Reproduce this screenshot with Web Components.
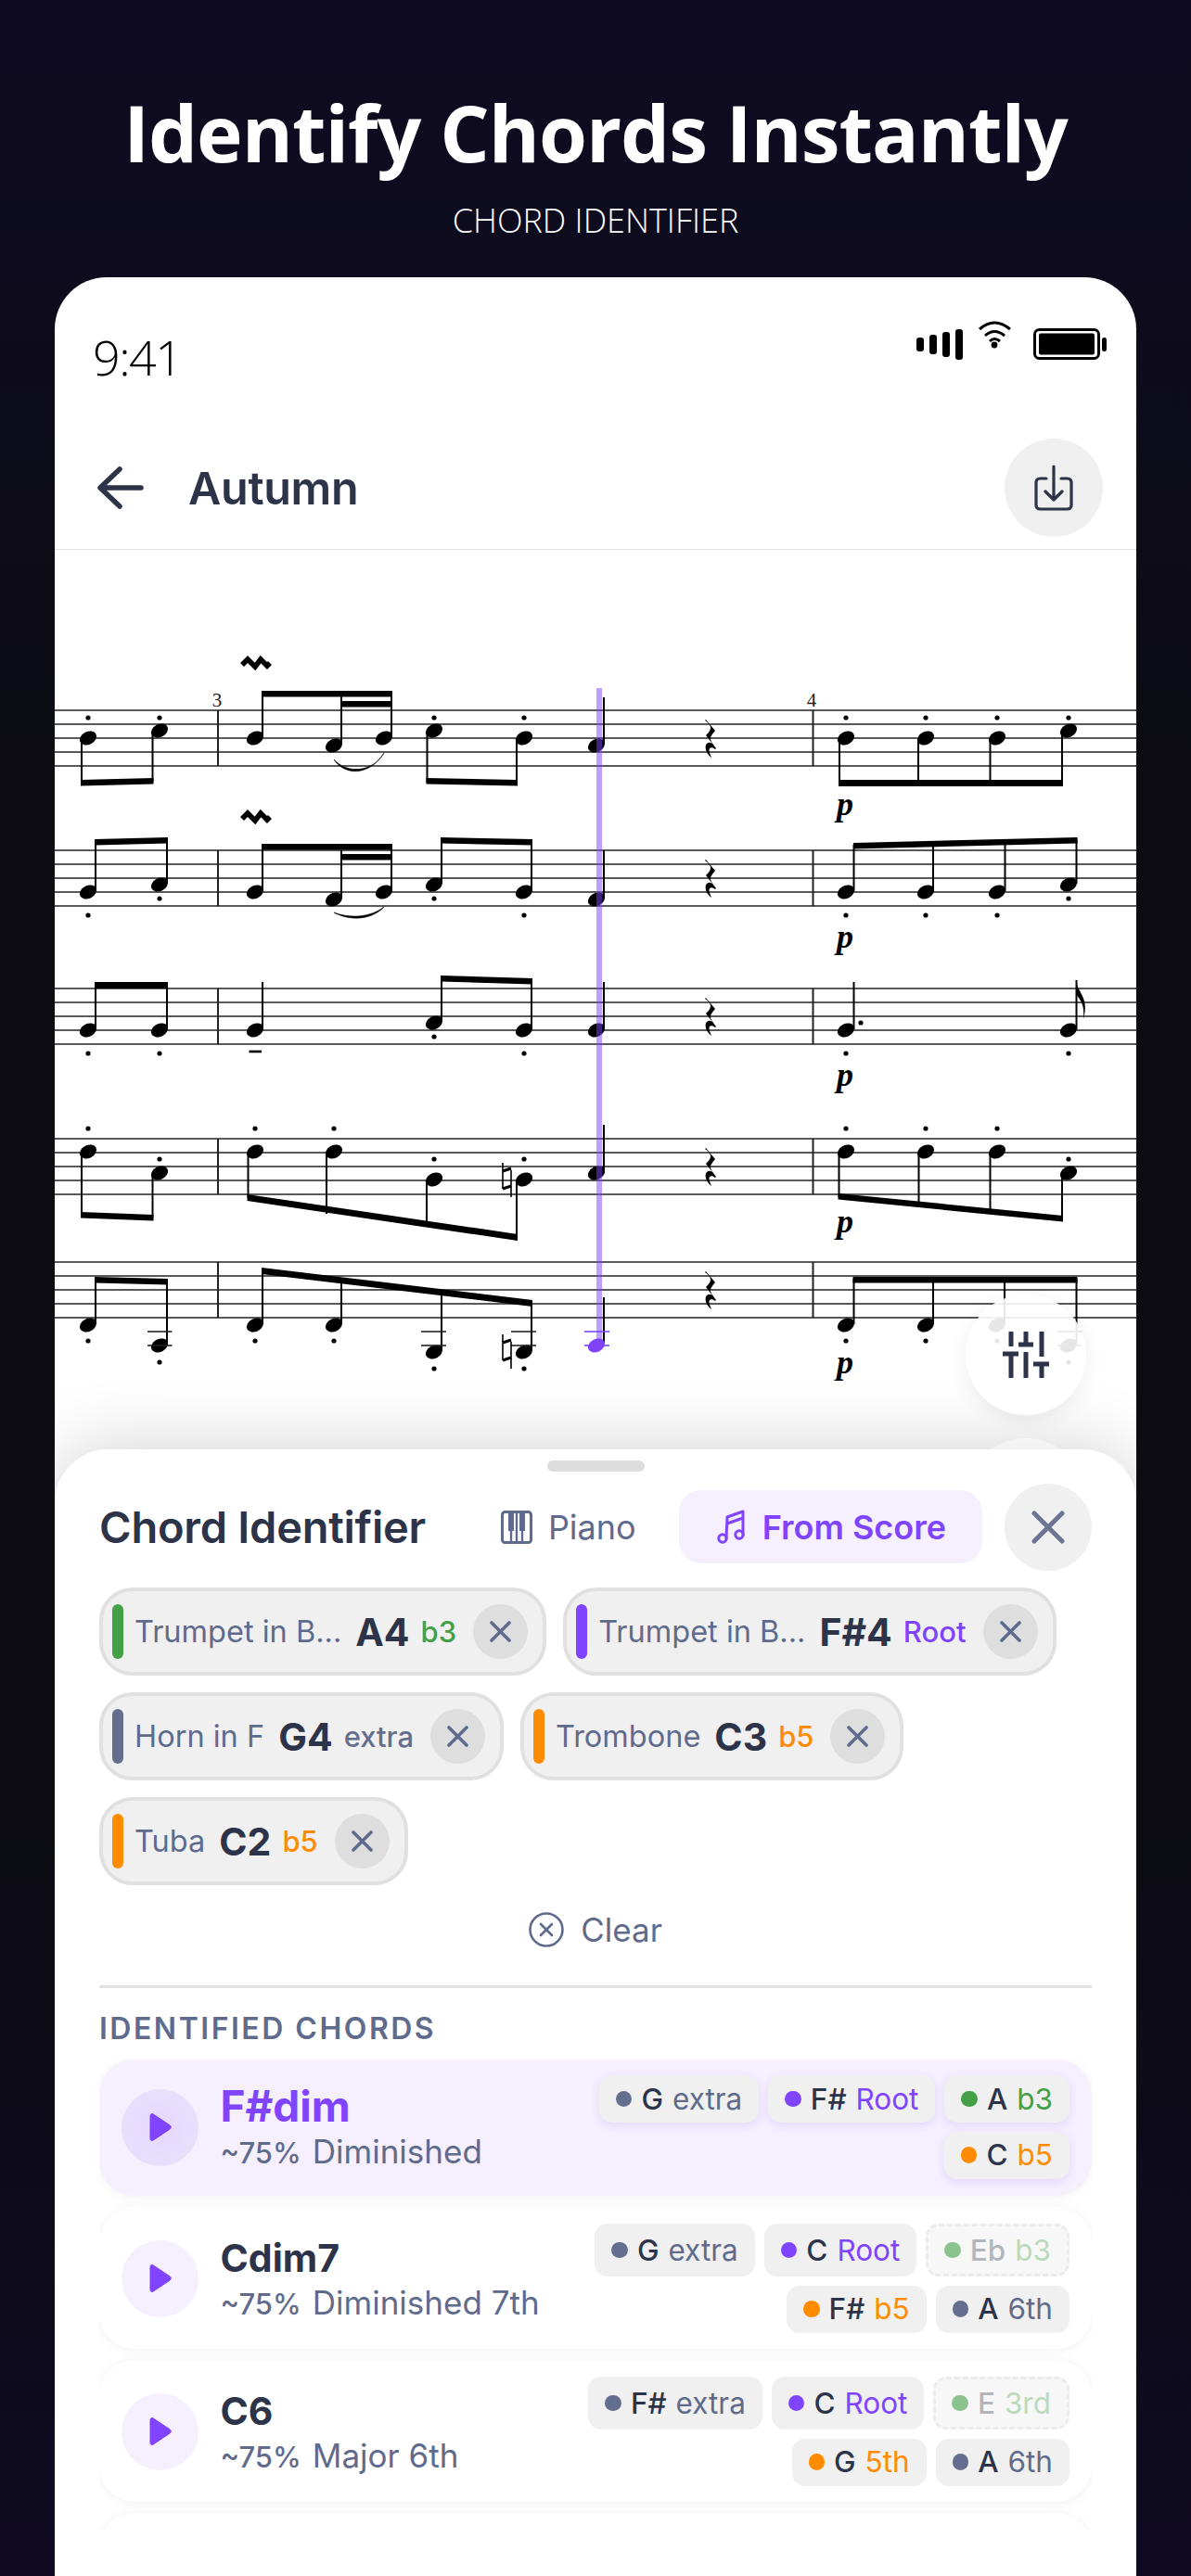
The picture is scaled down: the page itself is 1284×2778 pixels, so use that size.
<!DOCTYPE html>
<html><head><meta charset="utf-8"><title>Identify Chords Instantly</title>
<style>
html,body{margin:0;padding:0;width:1284px;height:2778px;overflow:hidden;background:#0c0c12;}
</style></head><body>
<promo-page>
  <promo-hero slot="hero" heading="Identify Chords Instantly" tag="CHORD IDENTIFIER"></promo-hero>
  <phone-frame>
    <status-bar></status-bar>
    <nav-header>Autumn</nav-header>
    <score-view></score-view>
    <chord-sheet>
      <note-chip slot="chips" tone="green" inst="Trumpet in B..." note="A4" role="b3"></note-chip>
      <note-chip slot="chips" tone="purple" inst="Trumpet in B..." note="F#4" role="Root"></note-chip>
      <note-chip slot="chips" tone="slate" inst="Horn in F" note="G4" role="extra"></note-chip>
      <note-chip slot="chips" tone="orange" inst="Trombone" note="C3" role="b5"></note-chip>
      <note-chip slot="chips" tone="orange" inst="Tuba" note="C2" role="b5"></note-chip>
      <chord-row active name="F#dim" pct="~75%" kind="Diminished">
        <tone-tag tone="slate" role="extra">G</tone-tag><tone-tag tone="purple" role="Root">F#</tone-tag><tone-tag tone="green" role="b3">A</tone-tag><tone-tag tone="orange" role="b5">C</tone-tag>
      </chord-row>
      <chord-row name="Cdim7" pct="~75%" kind="Diminished 7th">
        <tone-tag tone="slate" role="extra">G</tone-tag><tone-tag tone="purple" role="Root">C</tone-tag><tone-tag ghost tone="green" role="b3">Eb</tone-tag><tone-tag tone="orange" role="b5">F#</tone-tag><tone-tag tone="slate" role="6th">A</tone-tag>
      </chord-row>
      <chord-row name="C6" pct="~75%" kind="Major 6th">
        <tone-tag tone="slate" role="extra">F#</tone-tag><tone-tag tone="purple" role="Root">C</tone-tag><tone-tag ghost tone="green" role="3rd">E</tone-tag><tone-tag tone="orange" role="5th">G</tone-tag><tone-tag tone="slate" role="6th">A</tone-tag>
      </chord-row>
      <chord-row name="" pct="" kind=""></chord-row>
    </chord-sheet>
  </phone-frame>
</promo-page>
<script>
const TONES={green:'#43a047',purple:'#8044ff',slate:'#646e8e',orange:'#ff8c00'};
const INK='#2d3348',SLATE='#5f6b8c';
function def(name,css,html,init){
  customElements.define(name,class extends HTMLElement{
    constructor(){super();this.attachShadow({mode:'open'});}
    connectedCallback(){
      const h=typeof html==='function'?html(this):html;
      this.shadowRoot.innerHTML='<style>'+css+'</style>'+h;
      if(init)init(this);
    }
  });
}
def('promo-page',`
:host{display:flex;flex-direction:column;width:1284px;height:2778px;
background:linear-gradient(180deg,#0e0b23 0,#0c0c12 30%,#0c0c12 70%,#0f0a22 100%);font-family:Inter,"Noto Sans",sans-serif;overflow:hidden}
`,`<slot name="hero"></slot><slot></slot>`);

def('promo-hero',`
:host{display:flex;flex-direction:column;align-items:center;height:299px;flex:none;color:#fff;font-family:"Open Sans",sans-serif}
h1{margin:0;padding-top:86px;font-size:84px;line-height:114px;font-weight:700;letter-spacing:-1px}
p{margin:0;margin-top:15px;font-size:36px;line-height:46px;font-weight:300}
`,el=>`<h1>${el.getAttribute('heading')}</h1><p>${el.getAttribute('tag')}</p>`);

def('phone-frame',`
:host{display:flex;flex-direction:column;flex:1;min-height:0;margin:0 59px;background:#fff;border-radius:56px 56px 0 0;overflow:hidden;position:relative}
`,`<slot></slot>`);

def('status-bar',`
:host{display:flex;justify-content:space-between;align-items:flex-start;height:160px;flex:none;padding:0 31px 0 41px;box-sizing:border-box}
.t{font-family:"Open Sans",sans-serif;font-weight:300;font-size:52px;line-height:60px;margin-top:56px;color:#000;letter-spacing:-1.5px}
svg{display:block;margin-top:46px}
`,`<div class="t">9:41</div>
<svg width="206" height="45" viewBox="989 345 206 45">
<g fill="#000"><rect x="989" y="364" width="8" height="15" rx="3"/><rect x="1003" y="361" width="8" height="21" rx="3"/><rect x="1017" y="358" width="8" height="27" rx="3"/><rect x="1031" y="355" width="8" height="33" rx="3"/></g>
<g fill="none" stroke="#000" stroke-width="3"><path d="M1057 355Q1073 341 1090 355"/><path d="M1063 362Q1073 353 1084 362"/><path d="M1068 368Q1073 363 1079 368"/></g>
<circle cx="1073" cy="372" r="3.4"/>
<rect x="1116.5" y="355.5" width="69" height="31" rx="5" fill="none" stroke="#000" stroke-width="3"/>
<rect x="1121" y="359.5" width="60" height="23" rx="2" fill="#000"/>
<rect x="1189" y="364" width="5" height="15" rx="2.5" fill="#000"/>
</svg>`);

def('nav-header',`
:host{display:flex;align-items:center;flex:none;padding:14px 36px 13px 46px;border-bottom:1px solid #e4e4e4}
svg.b{display:block;margin-right:48px}
.t{font-size:48.5px;line-height:58px;font-weight:600;color:${INK};flex:1;letter-spacing:-.3px;padding-top:2px}
.btn{width:106px;height:106px;border-radius:50%;background:#f0f0f0;display:flex;align-items:center;justify-content:center}
`,`<svg class="b" width="50" height="46" viewBox="0 0 50 46" fill="none" stroke="${INK}" stroke-width="5.5" stroke-linecap="round" stroke-linejoin="round"><path d="M47 23H5M24 3L3 23l21 20"/></svg>
<div class="t"><slot></slot></div>
<div class="btn"><svg width="42" height="50" viewBox="0 0 42 50" fill="none" stroke="${INK}" stroke-width="3.2" stroke-linecap="round" stroke-linejoin="round"><path d="M13 15H6a4 4 0 0 0-4 4v25a4 4 0 0 0 4 4h30a4 4 0 0 0 4-4V19a4 4 0 0 0-4-4h-7"/><path d="M21 2v36M12 29l9 9 9-9"/></svg></div>`);

function musicSvg(){
  const out=[];
  const head=(x,y,f='#000')=>out.push(`<ellipse cx="${x}" cy="${y}" rx="9.6" ry="6.9" fill="${f}" transform="rotate(-27 ${x} ${y})"/>`);
  const line=(x1,y1,x2,y2,w=2,c='#000')=>out.push(`<line x1="${x1}" y1="${y1}" x2="${x2}" y2="${y2}" stroke="${c}" stroke-width="${w}"/>`);
  const beam=(x1,y1,x2,y2,h=6.5)=>out.push(`<polygon points="${x1},${y1} ${x2},${y2} ${x2},${y2+h} ${x1},${y1+h}"/>`);
  const dot=(x,y)=>out.push(`<circle cx="${x}" cy="${y}" r="2.6"/>`);
  const up=(hx,hy,sx,top)=>{head(hx,hy);line(sx,hy-1,sx,top);};
  const dn=(hx,hy,sx,bot)=>{head(hx,hy);line(sx,hy+1,sx,bot);};
  const rest=(x,y,h)=>{const k=h/41;out.push(`<path transform="translate(${x} ${y}) scale(${k})" d="M-5 0L5 12C3 15 0 17 0 21C0 23 3 27 6 31L5 32C1 29-3 30-1 36L1 41C-5 37-7 29-4 26C-2 24 0 25 2 26L-5 17C-2 14 0 12 0 9C0 6-3 3-6 1Z"/>`);};
  const mordent=(x,y)=>out.push(`<polyline transform="translate(${x} ${y})" points="-14,2 -8,-4 0,4 6,-4 13,3 16,0" fill="none" stroke="#000" stroke-width="5.6"/>`);
  const natural=(y)=>{line(542,y,542,y+28,1.6);line(551,y+8,551,y+37,1.6);line(542,y+9,551,y+6,3.2);line(542,y+28,551,y+25,3.2);};
  const ledger=(x1,x2,c='#222')=>{line(x1,1437,x2,1437,1.6,c);line(x1,1452,x2,1452,1.6,c);};
  const p=(x,y)=>out.push(`<text x="${x}" y="${y}" font-family="'Liberation Serif',serif" font-weight="700" font-style="italic" font-size="36" text-anchor="middle">p</text>`);
  const num=(x,y,t)=>out.push(`<text x="${x}" y="${y}" font-family="'Liberation Serif',serif" font-size="21" fill="#222" text-anchor="middle">${t}</text>`);
  [767,918,1067,1229,1362].forEach((t,i)=>{
    const gaps=[0,15,30,45,60];
    gaps.forEach(g=>line(59,t+g,1225,t+g,1.6,'#222'));
    line(235,t,235,t+60,2,'#222');line(876.5,t,876.5,t+60,2,'#222');
    rest(766,t+10,41);
  });
  // staff 1
  dn(95,797,88,846);dn(172,789,164.5,844);beam(87,842,165.5,840);dot(95,775);dot(172,775);
  num(234,763,'3');mordent(275,716);
  up(275,797,283,746);up(360,805,368,752);up(414,797,422,746);beam(282,746,423,746);beam(367,757,423,757);
  out.push(`<path d="M360 820C372 838 398 838 414 813C402 834 374 836 360 820Z" stroke="#000" stroke-width=".6"/>`);
  dn(468,789,460.5,845);dn(565,797,557,846);beam(459.5,840,558,842);dot(468,775);dot(565,775);
  up(643,805,651,753);
  num(875,763,'4');
  dn(912,797,905,845);dn(998,797,990,845);dn(1075,797,1067.5,845);dn(1152,789,1145,845);beam(904,842,1146,842,7);
  [912,998,1075,1152].forEach(x=>dot(x,775));p(911,880);
  // staff 2
  up(95,963,103,908);up(172,955,180,906);beam(102,906,181,904);dot(95,988);dot(172,970);
  mordent(275,882);
  up(275,963,283,912);up(360,971,368,918);up(414,963,422,912);beam(282,911,423,911);beam(367,922,423,922);
  out.push(`<path d="M360 985C378 992 400 990 414 979C400 994 376 994 360 985Z" stroke="#000" stroke-width=".6"/>`);
  up(468,955,476,906);up(565,963,573,908);beam(475,904,574,906);dot(468,970);dot(565,988);
  up(643,971,651,918);
  up(912,963,920.5,912);up(998,963,1006,910);up(1075,963,1083.5,908);up(1152,955,1160.5,906);beam(920,910,1161.5,904,6.5);
  dot(912,988);dot(998,988);dot(1075,988);dot(1152,970);p(911,1023);
  // staff 3
  up(95,1112,103,1062);up(172,1112,180,1062);beam(102,1060,181,1060,7);dot(95,1137);dot(172,1137);
  up(275,1112,283,1060);line(268.5,1135,282,1135,2.6);
  up(468,1104,476,1055);up(565,1112,573,1058);beam(475,1053,574,1056);dot(468,1119);dot(565,1137);
  up(643,1112,651,1060);
  up(912,1112,920.5,1060);dot(928,1104);dot(912,1137);
  up(1152,1112,1160.5,1058);out.push(`<path d="M1160 1057C1161 1072 1175 1076 1168 1100C1170 1082 1163 1079 1160 1072Z"/>`);dot(1152,1137);
  p(911,1172);
  // staff 4
  dn(95,1243,88,1312);dn(172,1266,164.5,1314);beam(87,1308,165.5,1311,6.5);dot(95,1218);dot(172,1251);
  dn(275,1243,267.5,1293);dn(360,1243,352,1310);dn(468,1273,460,1318);dn(565,1273,557,1335);beam(266.5,1289,558,1332,7);
  dot(275,1218);dot(360,1218);dot(468,1251);dot(565,1251);natural(1255);
  up(643,1266,651,1214);
  dn(912,1243,904.5,1292);dn(998,1243,990.5,1300);dn(1075,1243,1067.5,1306);dn(1152,1266,1145,1315);beam(903.5,1288,1146,1312,6.5);
  [912,998,1075].forEach(x=>dot(x,1218));dot(1152,1251);p(911,1330);
  // staff 5
  up(95,1430,103,1380);up(172,1452,180,1382);ledger(159,185.5);beam(102,1378,181,1380,6.5);dot(95,1447);dot(172,1470);
  up(275,1430,283,1370);up(360,1430,368,1384);up(468,1459,476,1392);up(565,1459,573,1406);ledger(454,481);ledger(551,578);natural(1440);beam(282,1368,574,1403,7);
  dot(275,1447);dot(360,1447);dot(468,1477);dot(565,1477);
  up(912,1430,920.5,1380);up(998,1430,1006,1380);up(1075,1430,1083,1380);up(1152,1452,1160.5,1380);ledger(1140,1166);beam(919.5,1378,1161.5,1378,6.5);
  [912,998,1075].forEach(x=>dot(x,1447));dot(1152,1470);p(911,1482);
  // playhead
  line(651,1400,651,1450,2);
  out.push(`<rect x="643" y="743" width="6" height="704" fill="#7c44ff" fill-opacity=".5"/>`);
  ledger(630,657,'#8044ff');head(643,1452,'#8044ff');
  return `<svg width="1166" height="970" viewBox="59 594 1166 970" style="display:block">${out.join('')}</svg>`;
}
def('score-view',`
:host{display:block;flex:none;height:970px;position:relative}
.shade{position:absolute;left:0;right:0;top:970px;height:300px;border-radius:58px 58px 0 0;box-shadow:0 0 80px rgba(0,0,0,.19)}
.fab{position:absolute;left:982px;width:130px;height:130px;border-radius:50%;background:rgba(255,255,255,.9);box-shadow:0 6px 22px rgba(0,0,0,.07);display:flex;align-items:center;justify-content:center}
.fab.low{background:rgba(255,255,255,.45);box-shadow:none}
`,()=>musicSvg()+`<div class="shade"></div>
<div class="fab" style="top:803px"><svg width="50" height="50" viewBox="0 0 50 50" fill="none" stroke="${INK}" stroke-width="5"><path d="M9 0V16M0 24H17M9 24V50M25 0V14M17 14H33M25 22V50M42 0V27M33 35H50M42 35V50"/></svg></div>
<div class="fab low" style="top:958px"></div>`);

def('chord-sheet',`
:host{display:block;flex:1;position:relative;z-index:2;background:#fff;border-radius:58px 58px 0 0;padding:0 48px;box-sizing:border-box;min-height:0;margin-top:0}
.h{width:105px;height:12px;border-radius:6px;background:#ddd;margin:12px auto}
.top{display:flex;align-items:center;height:95px}
.ttl{font-size:47px;line-height:56px;font-weight:600;color:${INK};flex:1;letter-spacing:-.25px}
.tab{display:flex;align-items:center;gap:17px;font-size:36px;color:${SLATE};margin-right:46px}
.pill{display:flex;align-items:center;gap:18px;height:79px;box-sizing:border-box;padding:0 39px 0 41px;background:#f5effe;border-radius:24px;color:#8044ff;font-size:36px;font-weight:600;margin-right:24px}
.x{width:94px;height:94px;border-radius:50%;background:#f0f0f0;display:flex;align-items:center;justify-content:center}
svg{display:block}
.chips{display:flex;flex-wrap:wrap;gap:18px;margin-top:18px}
.clear{display:flex;align-items:center;justify-content:center;gap:18px;margin-top:29px;height:38px;font-size:35px;color:${SLATE}}
.rule{height:3px;background:#e2e2e2;margin-top:41px}
.lab{font-size:32px;line-height:38px;font-weight:600;letter-spacing:2.5px;color:${SLATE};margin-top:25px}
.list{display:flex;flex-direction:column;gap:12px;height:507px;overflow:hidden;margin-top:14px}
`,`<div class="h"></div>
<div class="top"><div class="ttl">Chord Identifier</div>
<div class="tab"><svg width="34" height="36" viewBox="0 0 34 36"><rect x="1.5" y="1.5" width="31" height="33" rx="3" fill="none" stroke="${SLATE}" stroke-width="3"/><path d="M8 3h6v19H8zM20 3h6v19h-6z" fill="${SLATE}"/><path d="M11 20v14M17 3v31M23 20v14" stroke="${SLATE}" stroke-width="2.4"/></svg>Piano</div>
<div class="pill"><svg width="31" height="37" viewBox="0 0 31 37" fill="none" stroke="#8044ff" stroke-width="3" stroke-linecap="round" stroke-linejoin="round"><circle cx="6" cy="31" r="4.2"/><circle cx="24" cy="27" r="4.2"/><path d="M10 31L11 8L28 2V27M11 15L28 9"/></svg>From Score</div>
<div class="x"><svg width="36" height="36" viewBox="0 0 36 36" stroke="#6b7593" stroke-width="5" stroke-linecap="round"><path d="M3 3l30 30M33 3L3 33"/></svg></div></div>
<div class="chips"><slot name="chips"></slot></div>
<div class="clear"><svg width="38" height="38" viewBox="0 0 38 38" fill="none" stroke="${SLATE}" stroke-width="2.6" stroke-linecap="round"><circle cx="19" cy="19" r="17.5"/><path d="M13 13l12 12M25 13L13 25"/></svg>Clear</div>
<div class="rule"></div>
<div class="lab">IDENTIFIED CHORDS</div>
<div class="list"><slot></slot></div>`);

def('note-chip',`
:host{display:flex;align-items:center;height:95px;box-sizing:border-box;border:4px solid #e0e0e0;background:#f0f0f0;border-radius:36px;padding:0 16px 0 10px;font-family:Inter,sans-serif}
.bar{width:12px;height:59px;border-radius:6px;margin-right:12px}
.i{font-size:32.5px;color:${SLATE};margin-right:15px}
.n{font-size:41px;font-weight:700;color:${INK};margin-right:12px}
.r{font-size:31px;font-weight:500;margin-right:18px}
.x{width:59px;height:59px;border-radius:50%;background:#dedede;display:flex;align-items:center;justify-content:center}
`,el=>{const c=TONES[el.getAttribute('tone')];return `<div class="bar" style="background:${c}"></div><span class="i">${el.getAttribute('inst')}</span><span class="n">${el.getAttribute('note')}</span><span class="r" style="color:${c}">${el.getAttribute('role')}</span><div class="x"><svg width="23" height="23" viewBox="0 0 23 23" stroke="${SLATE}" stroke-width="3.6" stroke-linecap="round"><path d="M2 2l19 19M21 2L2 21"/></svg></div>`;});

def('chord-row',`
:host{display:flex;align-items:center;flex:none;box-sizing:border-box;padding:18px 24px 17px 23.5px;border-radius:38px;background:#fff;box-shadow:0 1px 12px rgba(0,0,0,.06);min-height:153px;font-family:Inter,sans-serif}
:host([active]){background:#f5effe;min-height:147px;padding-top:17px}
.p{width:83px;height:83px;border-radius:50%;background:#f5effe;display:flex;align-items:center;justify-content:center;margin-right:24px;flex:none}
:host([active]) .p{background:radial-gradient(circle,#e4d8fc 0,#ebe2fd 100%)}
.info{display:flex;flex-direction:column}
.nm{font-size:41px;line-height:52px;font-weight:700;color:${INK};margin-bottom:1px}
:host([active]) .nm{font-size:46px;font-weight:700;color:#8044ff;line-height:54px;margin-top:-2px}
.sub{font-size:35px;line-height:42px;color:${SLATE};display:flex;gap:12px;align-items:baseline}
.pc{font-size:31px;font-weight:500}
.tags{margin-left:auto;width:540px;display:flex;flex-wrap:wrap;justify-content:flex-end;gap:9.5px 10px;align-self:flex-start}
`,el=>{ if(!el.getAttribute('name'))return ''; return `<div class="p"><svg width="26" height="31" viewBox="0 0 26 31"><path d="M3 2.5a2 2 0 0 1 3-1.7l18 12a2.6 2.6 0 0 1 0 4.4l-18 12a2 2 0 0 1-3-1.7z" fill="#8044ff" stroke="#8044ff" stroke-linejoin="round"/></svg></div>
<div class="info"><div class="nm">${el.getAttribute('name')}</div><div class="sub"><span class="pc">${el.getAttribute('pct')}</span><span>${el.getAttribute('kind')}</span></div></div>
<div class="tags"><slot></slot></div>`;});

def('tone-tag',`
:host{display:flex;align-items:center;box-sizing:border-box;min-height:51px;padding:0 18px;background:#f0f0f0;border-radius:14px;font-size:31.5px;line-height:40px;font-family:Inter,sans-serif;color:${INK}}
:host([data-a]){box-shadow:0 3px 10px rgba(128,68,255,.14)}
:host([ghost]){background:#f7f7f7;border:3px dashed #ececec;padding:0 17px;min-height:57px}
.d{width:17.5px;height:17.5px;border-radius:50%;margin-right:10px}
.n{font-weight:500}
.r{margin-left:10px}
:host([ghost]) .d{opacity:.6}
:host([ghost]) .n,:host([ghost]) .r{opacity:.33}
`,el=>{const c=TONES[el.getAttribute('tone')];if(el.parentElement.hasAttribute('active'))el.setAttribute('data-a','');return `<div class="d" style="background:${c}"></div><span class="n"><slot></slot></span><span class="r" style="color:${c===TONES.slate?SLATE:c}">${el.getAttribute('role')}</span>`;});
</script>
</body></html>
